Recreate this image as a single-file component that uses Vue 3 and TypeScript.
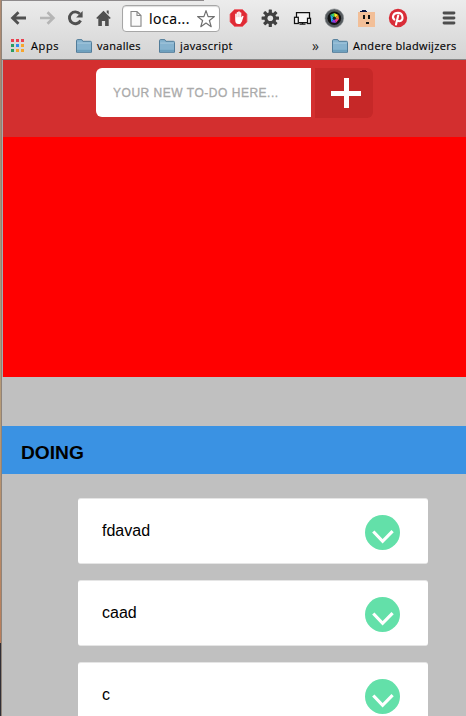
<script setup lang="ts">
interface Todo { id: number; text: string }
interface Bookmark { label: string; cls: string }

const bookmarks: Bookmark[] = [
  { label: 'vanalles', cls: 'bm-first' },
  { label: 'javascript', cls: 'bm-second' },
]
const todos: Todo[] = [
  { id: 1, text: 'fdavad' },
  { id: 2, text: 'caad' },
  { id: 3, text: 'c' },
]
const dots: string[] = ['#ea4050', '#ea4050', '#ea4050', '#2a9d62', '#2d8cf0', '#f6a52c', '#2a9d62', '#f6a52c', '#f6a52c']
</script>

<template>
  <div class="screen">
    <div class="desktop"><div class="desktop-top"></div><div class="desktop-bottom"></div></div>
    <div class="browser">
      <div class="chrome">
        <div class="tabline"></div>
        <div class="toolbar">
          <div class="nav">
            <svg width="28" height="28" viewBox="0 0 28 28"><path d="M21 14H8M13.5 8.3L7.6 14l5.9 5.7" fill="none" stroke="#505050" stroke-width="2.8" /></svg>
            <svg width="28" height="28" viewBox="0 0 28 28"><path d="M7 14h13M14.5 8.3l5.9 5.7-5.9 5.7" fill="none" stroke="#b5b5b5" stroke-width="2.6" /></svg>
            <svg width="28" height="28" viewBox="0 0 28 28"><path d="M18.8 9.9A5.9 5.9 0 1 0 19.6 16.5" fill="none" stroke="#505050" stroke-width="2.9" /><path d="M21.6 7v6.5h-6.5z" fill="#505050" /></svg>
            <svg width="28" height="28" viewBox="0 0 28 28"><path d="M14.5 6.8L21.8 14l-1.2 1.1-.9-.8V22h-3.6v-5h-3.2v5H9.3v-7.7l-.9.8L7.2 14zM17.7 6.5h2v4l-2-2z" fill="#505050" /></svg>
          </div>
          <div class="address">
            <svg width="14" height="18" viewBox="0 0 14 18"><path d="M2 1.5h6l4 4v10.8H2zM8 1.5v4h4" fill="#fafafa" stroke="#858585" stroke-width="1.1" /></svg>
            <span class="url">loca...</span>
            <svg class="star" width="20" height="20" viewBox="0 0 20 20"><path d="M10 1.6l2.1 6h6.3l-5 3.9 1.8 6.2-5.2-3.6-5.2 3.6 1.8-6.2-5-3.9h6.3z" fill="#fff" stroke="#707070" stroke-width="1.2" stroke-linejoin="round" /></svg>
          </div>
          <div class="extensions">
            <svg width="32" height="28" viewBox="0 0 32 28"><path d="M12.5 5.5h8L25 10v8l-4.5 4.5h-8L8 18v-8z" fill="#e02b35" stroke="#eb6770" stroke-width=".8" /><path d="M13.2 15.5V10q.8-1 1.5 0V8.4q.8-1 1.5 0V7.8q.8-1 1.6 0v1q.7-.9 1.5 0v4.7l1-1.6q.9-.6 1.3.3l-1.7 5.2q-.9 2.7-3.4 2.7c-2.5 0-3.3-1.5-3.3-4.6z" fill="#fff" /><path d="M14.8 9.6v3.7M16.3 8.7v4.4M17.9 9.3v3.9" stroke="#e99a9e" stroke-width=".5" /></svg>
            <svg width="32" height="28" viewBox="0 0 32 28"><g transform="translate(16.3 14.2)"><g fill="#414141"><rect v-for="n in 4" :key="n" x="-1.6" y="-8.7" width="3.2" height="17.4" rx=".5" :transform="`rotate(${n * 45})`" /></g><circle r="4.4" fill="none" stroke="#414141" stroke-width="3.2" /><circle r="2.8" fill="#e4e4e4" /></g></svg>
            <svg width="32" height="28" viewBox="0 0 32 28"><g fill="#f5f5f5" stroke="#111" stroke-width="1.25"><path d="M10.5 13V8.5h13V18.5h-11" /><path d="M13.5 20h6M16.5 18.5V20" /><rect x="8.5" y="13.3" width="3.8" height="6.2" /><rect x="21.5" y="14.3" width="3" height="5.2" /></g></svg>
            <svg width="32" height="28" viewBox="0 0 32 28"><circle cx="16.3" cy="14.2" r="9.3" fill="#555a5e" stroke="#878b8d" stroke-width=".6" /><circle cx="16.3" cy="14.2" r="6.8" fill="#111" /><path d="M16.3 14.2l-4-3.5 4-1.8z" fill="#35c96b" /><path d="M16.3 14.2V8.9l4 2z" fill="#f0ef26" /><path d="M16.3 14.2l4-3.3.8 4z" fill="#f58a28" /><path d="M16.3 14.2l4.8.7-3.3 4z" fill="#ec3985" /><path d="M16.3 14.2l1.5 4.7-4.5-.6z" fill="#8a3ce8" /><path d="M16.3 14.2l-3 4.1-1-7.6z" fill="#29a7ed" /><circle cx="16.3" cy="14.2" r="1.6" fill="#13252b" /></svg>
            <svg width="32" height="28" viewBox="0 0 32 28" shape-rendering="crispEdges"><path d="M8 8h17v15H8z" fill="#f2bf98" /><path d="M10 8V7h2V6h4v1h1v1z" fill="#0b1744" /><path d="M13 11h2v4h-2zM18 11h2v4h-2zM16 18h3v2h-3z" fill="#111" /></svg>
            <svg width="32" height="28" viewBox="0 0 32 28"><circle cx="16" cy="14" r="9.2" fill="#d92d38" /><path d="M12.3 15.6c-2.6-2.4-1.3-6.7 3.7-6.7 5.4 0 6.1 8.3 1.4 8.3-1 0-1.7-.5-2-.9M16.2 11.6l-2.2 9" fill="none" stroke="#fff" stroke-width="2.1" stroke-linecap="round" /></svg>
          </div>
          <svg class="menu" width="14" height="14" viewBox="0 0 14 14"><path d="M2 2h10M2 7h10M2 12h10" stroke="#4d4d4d" stroke-width="2.8" stroke-linecap="round" /></svg>
        </div>
        <div class="bookmarks">
          <div class="apps"><i v-for="(c, i) in dots" :key="i" :style="{ background: c }"></i></div>
          <span class="label apps-label">Apps</span>
          <template v-for="b in bookmarks" :key="b.label">
            <svg class="folder" :class="b.cls" width="16" height="14" viewBox="0 0 16 14"><path d="M.5 13.3V1.7Q.5.6 1.6.6h4.2l1 1.7h7.6q1.1 0 1.1 1.1v9.9z" fill="#86b3cf" stroke="#517c99" /><path d="M1.2 4.1h13.6" stroke="#a5c8dc" /><path d="M1 11.8h14" stroke="#6c9fbd" stroke-width="2" /></svg>
            <span class="label" :class="`${b.cls}-label`">{{ b.label }}</span>
          </template>
          <span class="more">»</span>
          <svg class="folder last" width="16" height="14" viewBox="0 0 16 14"><path d="M.5 13.3V1.7Q.5.6 1.6.6h4.2l1 1.7h7.6q1.1 0 1.1 1.1v9.9z" fill="#86b3cf" stroke="#517c99" /><path d="M1.2 4.1h13.6" stroke="#a5c8dc" /><path d="M1 11.8h14" stroke="#6c9fbd" stroke-width="2" /></svg>
          <span class="label last-label">Andere bladwijzers</span>
        </div>
      </div>
      <main>
        <div class="top">
          <form class="new-todo" @submit.prevent>
            <input type="text" placeholder="YOUR NEW TO-DO HERE..." />
            <button type="submit" aria-label="Add"><svg width="30" height="30" viewBox="0 0 30 30"><path d="M0 15.5h30M15.5 0v30" stroke="#fff" stroke-width="5" shape-rendering="crispEdges" /></svg></button>
          </form>
        </div>
        <h2>DOING</h2>
        <ul>
          <li v-for="t in todos" :key="t.id">
            <span>{{ t.text }}</span>
            <svg width="35" height="35" viewBox="0 0 35 35"><circle cx="17.5" cy="17.5" r="17.5" fill="#63e0a9" /><path d="M8.3 16.5l9.3 9.8 10-10.2" fill="none" stroke="#fff" stroke-width="3.2" /></svg>
          </li>
        </ul>
      </main>
    </div>
  </div>
</template>

<style>
body { overflow: hidden; }
</style>
<style scoped>
* { box-sizing: border-box; }
.screen { display: flex; width: 466px; height: 716px; overflow: hidden; background: #c0c0c0; font-family: "Liberation Sans", Arial, sans-serif; }
.desktop { width: 2px; display: flex; flex-direction: column; border-right: 1px solid #8f8379; }
.desktop-top { height: 643px; background: linear-gradient(#b08b71, #a98972 15%, #b79b76 65%, #b97c59); }
.desktop-bottom { flex: 1; background: #302e36; }
.browser { width: 464px; flex: none; }
.chrome { height: 60px; background: linear-gradient(#ececec, #d4d4d4); border-bottom: 1px solid #868686; }
.tabline { height: 1px; width: 202px; background: #8e8a8c; }
.toolbar { display: flex; align-items: center; height: 34px; padding-left: 3px; }
.nav, .extensions { display: flex; }
.nav svg, .extensions svg { display: block; flex: none; }
.address { display: flex; align-items: center; width: 98px; height: 27px; margin: 1px 2px 0 5px; padding: 0 3px 0 6px; background: #fff; border: 1px solid #a6a6a6; border-radius: 4px; box-shadow: inset 0 1px 1px #ddd; }
.url { flex: 1; padding-left: 6px; font: 14px/20px "Open Sans", sans-serif; letter-spacing: .5px; color: #000; white-space: nowrap; -webkit-text-stroke: .15px #000; }
.star { flex: none; }
.menu { margin-left: 28px; }
.bookmarks { display: flex; align-items: center; height: 22px; padding-left: 9px; }
.apps { display: grid; grid-template-columns: repeat(3, 3px); grid-auto-rows: 3px; gap: 2px; flex: none; margin-bottom: 1px; }
.label { flex: none; font: 11px/16px "Open Sans", "Noto Sans", sans-serif; color: #000; white-space: nowrap; -webkit-text-stroke: .15px #000; }
.folder { flex: none; margin-bottom: 1px; }
.apps-label { width: 52px; padding-left: 7px; letter-spacing: .6px; }
.bm-first-label { width: 67px; padding-left: 5px; letter-spacing: .3px; }
.bm-second-label { width: 137px; padding-left: 5px; letter-spacing: .4px; }
.more { width: 20px; font: 14px/16px "Open Sans", sans-serif; color: #222; }
.last-label { padding-left: 5px; letter-spacing: .33px; }
main { height: 656px; }
.top { height: 317px; margin-left: 1px; background: red; box-shadow: -1px 0 #aaa; }
.new-todo { display: flex; align-items: flex-start; height: 77px; padding: 8px 0 0 93px; gap: 4px; background: #d32f2f; }
input { width: 215px; height: 49px; padding: 0 17px; border: 0; border-radius: 6px 0 0 6px; background: #fff; outline: 0; font: 12px "Liberation Sans", sans-serif; letter-spacing: .52px; }
input::placeholder { color: #aaa; opacity: 1; -webkit-text-stroke: .3px #aaa; }
button { display: flex; align-items: center; justify-content: center; width: 58px; height: 50px; padding: 0 0 0 4px; border: 0; border-radius: 0 6px 6px 0; background: #c62828; }
h2 { display: flex; align-items: center; height: 48px; margin: 49px 0 0; padding: 6px 0 0 19px; background: #3a92e3; color: #000; font-size: 19.2px; line-height: 24px; }
ul { margin: 24px 0 0 76px; padding: 0; width: 350px; display: flex; flex-direction: column; gap: 16px; list-style: none; }
li { display: flex; justify-content: space-between; height: 66px; padding: 16px 28px 0 24px; background: #fff; border-radius: 3px; border: solid #e5e5e5; border-width: 1px 0; font-size: 16px; color: #000; }
li span { line-height: 32px; }
</style>
